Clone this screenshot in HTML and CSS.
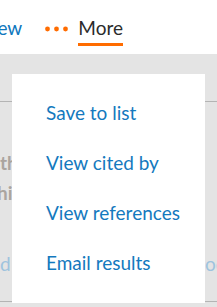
FILE: index.html
```html
<!DOCTYPE html>
<html lang="en">
<head>
<meta charset="utf-8">
<title>More menu</title>
<link rel="stylesheet" href="styles.css">
</head>
<body>
<header class="tabs">
  <span class="tab tab-view">View</span>
  <div class="more-group">
    <svg class="dots" viewBox="0 0 25 6" width="25" height="6" aria-hidden="true">
      <circle cx="2.5" cy="3" r="2.4"/>
      <circle cx="11.5" cy="3" r="2.4"/>
      <circle cx="20.5" cy="3" r="2.4"/>
    </svg>
    <span class="tab tab-more">More</span>
  </div>
</header>
<main class="page">
  <div class="rule"></div>
  <div class="ghost-lines">
    <p class="ghost">the</p>
    <p class="ghost ghost-indent">hich</p>
  </div>
  <div class="ghost-row">
    <span class="ghost-link">d</span>
    <span class="ghost-link ghost-right">oc</span>
  </div>
  <div class="rule"></div>
  <ul class="menu">
    <li><a class="menu-item" href="#">Save to list</a></li>
    <li><a class="menu-item" href="#">View cited by</a></li>
    <li><a class="menu-item" href="#">View references</a></li>
    <li><a class="menu-item" href="#">Email results</a></li>
  </ul>
</main>
</body>
</html>
```

FILE: styles.css
```css
html, body {
  margin: 0;
  padding: 0;
}
body {
  width: 217px;
  height: 307px;
  overflow: hidden;
  background: #ffffff;
  font-family: Lato, "Open Sans", sans-serif;
  font-size: 19px;
}
.tabs {
  display: flex;
  align-items: flex-start;
  height: 54px;
  box-sizing: border-box;
  padding-top: 16px;
  background: #ffffff;
  overflow: hidden;
}
.tab {
  line-height: 24px;
  white-space: nowrap;
}
.tab-view {
  color: #0f77bd;
  margin-left: -20px;
}
.more-group {
  display: flex;
  align-items: flex-start;
  margin-left: 23px;
  gap: 8px;
}
.dots {
  margin-top: 10px;
  fill: #ff6c00;
}
.tab-more {
  color: #2b2b2b;
  padding: 0 0 3px 0;
  border-bottom: 3px solid #ff6c00;
}
.page {
  position: relative;
  height: 253px;
  box-sizing: border-box;
  padding-top: 47px;
  background: #e4e4e4;
  overflow: hidden;
}
.rule {
  height: 1px;
  background: #b4b4b4;
}
.ghost-lines {
  padding-top: 46px;
}
.ghost {
  margin: 0;
  line-height: 30px;
  font-weight: 700;
  color: #aba59f;
  white-space: nowrap;
}
.ghost-indent {
  margin-left: -3px;
}
.ghost-row {
  display: flex;
  justify-content: space-between;
  line-height: 30px;
  margin-top: 41px;
  margin-bottom: 22px;
}
.ghost-link {
  color: #9ec3de;
  white-space: nowrap;
}
.ghost-right {
  width: 12px;
  overflow: hidden;
}
.menu {
  position: absolute;
  top: 20px;
  left: 12px;
  width: 193px;
  height: 229px;
  box-sizing: border-box;
  margin: 0;
  padding: 14px 0 15px 34px;
  list-style: none;
  background: #ffffff;
}
.menu li {
  line-height: 50px;
}
.menu-item {
  color: #1479be;
  text-decoration: none;
  white-space: nowrap;
}
```
